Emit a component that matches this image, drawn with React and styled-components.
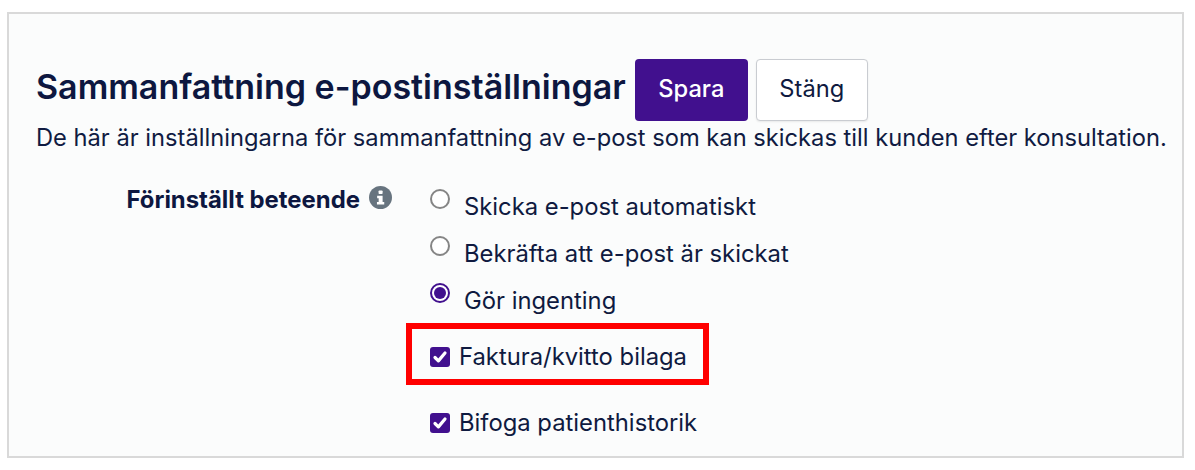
import React from "react";
import styled, { createGlobalStyle } from "styled-components";

const Global = createGlobalStyle`
  html, body { margin: 0; padding: 0; background: #fff; }
  body { font-family: Inter, "Liberation Sans", sans-serif; color: #0f1a40; }
`;

const Page = styled.div`
  position: relative;
  width: 1195px;
  height: 470px;
  padding: 12px 11px 12px 7px;
  box-sizing: border-box;
  overflow: hidden;
`;

const Panel = styled.section`
  box-sizing: border-box;
  height: 446px;
  border: 2px solid #d9d9d9;
  background: #fbfcfc;
  padding: 45px 0 0 27px;
  overflow: hidden;
`;

const Header = styled.div`
  display: flex;
  align-items: center;
  height: 62px;
`;

const Title = styled.h1`
  margin: 0 0 6px;
  font-size: 34px;
  line-height: 38px;
  font-weight: 600;
  color: #0d1740;
`;

const Button = styled.button`
  box-sizing: border-box;
  height: 62px;
  font-family: inherit;
  font-size: 23.7px;
  line-height: 28px;
  border-radius: 4px;
  padding: 0 0 2px;
  ${(p) =>
    p.$primary
      ? `width: 113px; margin-left: 9px; background: #41108e; border: none; color: #fff; font-weight: 500;`
      : `width: 112px; margin-left: 8px; background: #fff; border: 1px solid #c9ccd1; color: #0f1a40; font-weight: 400; box-shadow: 0 1px 2px rgba(0, 0, 0, 0.08);`}
`;

const Description = styled.p`
  margin: 1px 0 0;
  font-size: 23.7px;
  line-height: 32px;
  white-space: nowrap;
  color: #101b42;
`;

const Form = styled.div`
  display: flex;
  margin-top: 31px;
`;

const Label = styled.div`
  display: flex;
  justify-content: flex-end;
  gap: 9px;
  width: 356px;
  flex: none;
  font-size: 23.9px;
  line-height: 30px;
  font-weight: 700;
  color: #0d1740;
`;

const InfoIcon = styled.svg`
  width: 23px;
  height: 23px;
  margin-top: 1px;
`;

const Options = styled.div`
  display: flex;
  flex-direction: column;
  margin-left: 38px;
  padding-top: 5px;
`;

const RadioRow = styled.label`
  display: flex;
  align-items: flex-start;
  gap: 14px;
  height: 47px;
  font-size: 23.8px;
  line-height: 33px;
`;

const Radio = styled.span`
  box-sizing: border-box;
  width: 20px;
  height: 20px;
  margin-top: -1px;
  border-radius: 50%;
  background: #fff;
  border: 2px solid ${(p) => (p.$checked ? "#41108e" : "#858585")};
  display: flex;
  align-items: center;
  justify-content: center;
  &::after {
    content: "";
    display: ${(p) => (p.$checked ? "block" : "none")};
    width: 12px;
    height: 12px;
    border-radius: 50%;
    background: #41108e;
  }
`;

const CheckRow = styled.label`
  display: flex;
  align-items: center;
  gap: 9px;
  height: 34px;
  margin-top: ${(p) => p.$top}px;
  font-size: 23.8px;
  line-height: 34px;
`;

const Checkbox = styled.span`
  width: 20px;
  height: 20px;
  border-radius: 3px;
  background: #41108e;
  display: flex;
  align-items: center;
  justify-content: center;
`;

const Highlight = styled.div`
  position: absolute;
  left: 406px;
  top: 323px;
  width: 303px;
  height: 62px;
  box-sizing: border-box;
  border: 6px solid #ff0000;
`;

const Check = () => (
  <Checkbox>
    <svg width="18" height="18" viewBox="0 0 18 18" fill="none">
      <path d="M4 9.5l3.4 3.4L14 5" stroke="#fff" strokeWidth="3.2" strokeLinecap="round" strokeLinejoin="round" />
    </svg>
  </Checkbox>
);

export default function App() {
  return (
    <Page>
      <Global />
      <Panel>
        <Header>
          <Title>Sammanfattning e-postinställningar</Title>
          <Button $primary>Spara</Button>
          <Button>Stäng</Button>
        </Header>
        <Description>
          De här är inställningarna för sammanfattning av e-post som kan skickas till kunden efter konsultation.
        </Description>
        <Form>
          <Label>
            Förinställt beteende
            <InfoIcon viewBox="0 0 24 24">
              <circle cx="12" cy="12" r="12" fill="#67747f" />
              <rect x="10" y="4.8" width="4.2" height="3.6" rx="0.8" fill="#fff" />
              <path d="M8.5 10.2h5.7v6.4h1.7v2.6H8.3v-2.6h1.8v-3.8H8.5z" fill="#fff" />
            </InfoIcon>
          </Label>
          <Options>
            <RadioRow><Radio />Skicka e-post automatiskt</RadioRow>
            <RadioRow><Radio />Bekräfta att e-post är skickat</RadioRow>
            <RadioRow><Radio $checked />Gör ingenting</RadioRow>
            <CheckRow $top={9}><Check />Faktura/kvitto bilaga</CheckRow>
            <CheckRow $top={32}><Check />Bifoga patienthistorik</CheckRow>
          </Options>
        </Form>
      </Panel>
      <Highlight />
    </Page>
  );
}
